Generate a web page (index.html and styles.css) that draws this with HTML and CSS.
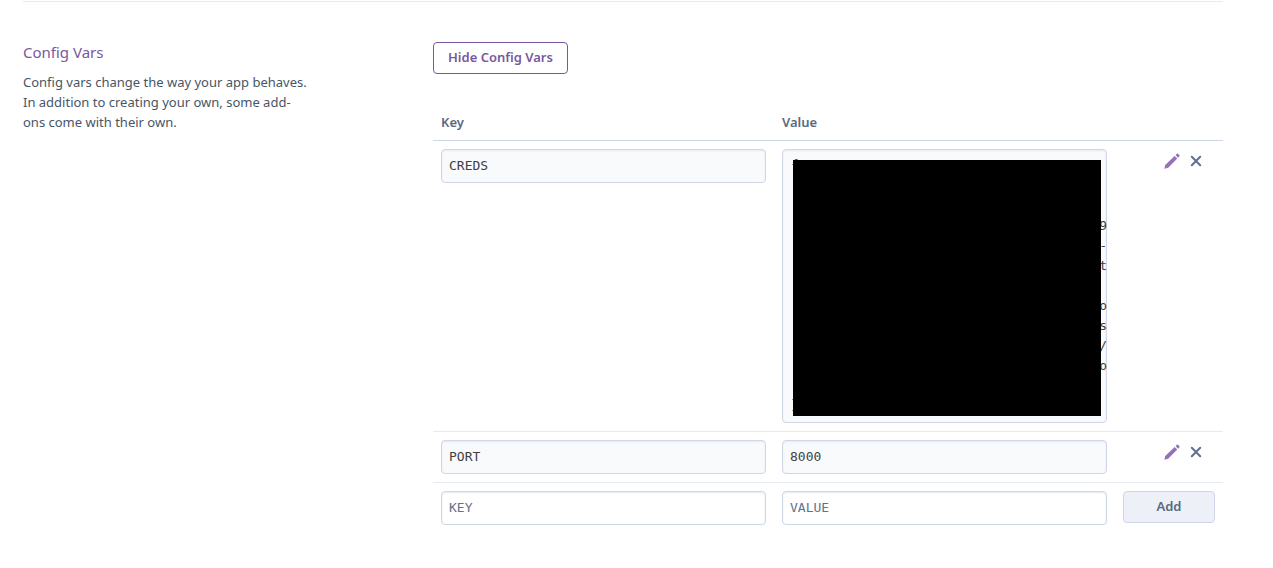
FILE: index.html
```html
<!DOCTYPE html>
<html lang="en">
<head>
<meta charset="utf-8">
<title>Config Vars</title>
<link rel="stylesheet" href="styles.css">
</head>
<body>
<svg class="sprite" aria-hidden="true">
  <symbol id="pencil" viewBox="0 0 16 16"><path d="M0.4 15.8 1.2 12 10.6 2.9 13.3 5.6 4.2 14.7ZM11.5 2.1 12.8.9C13.2.5 13.7.5 14.1.9L15.3 2.1C15.7 2.5 15.7 3 15.3 3.4L14.1 4.7Z"/></symbol>
  <symbol id="cross" viewBox="0 0 12 12"><path d="M1.8 1.8 10.2 10.2M10.2 1.8 1.8 10.2" fill="none" stroke="currentColor" stroke-width="2.1" stroke-linecap="round"/></symbol>
</svg>
<main class="page">
  <section class="settings">
    <div class="intro">
      <h2 class="title">Config Vars</h2>
      <p class="description">Config vars change the way your app behaves. In addition to creating your own, some add-ons come with their own.</p>
    </div>
    <form class="content">
      <button class="toggle" type="button">Hide Config Vars</button>
      <table class="vars">
        <thead>
          <tr><th class="field-col">Key</th><th class="field-col">Value</th><th class="action-col"></th></tr>
        </thead>
        <tbody>
          <tr>
            <td><input class="field saved" aria-label="Key" value="CREDS" readonly></td>
            <td>
              <div class="secret">
                <textarea class="field saved multiline" aria-label="Value" rows="13" readonly>{











}</textarea>
                <pre class="line-ends" aria-hidden="true">


9
-
t

o
s
/
o</pre>
                <div class="redaction"></div>
              </div>
            </td>
            <td>
              <div class="actions">
                <button class="icon-button edit" type="button" aria-label="Edit CREDS"><svg class="icon"><use href="#pencil"/></svg></button>
                <button class="icon-button" type="button" aria-label="Remove CREDS"><svg class="icon small"><use href="#cross"/></svg></button>
              </div>
            </td>
          </tr>
          <tr>
            <td><input class="field saved" aria-label="Key" value="PORT" readonly></td>
            <td><input class="field saved" aria-label="Value" value="8000" readonly></td>
            <td>
              <div class="actions">
                <button class="icon-button edit" type="button" aria-label="Edit PORT"><svg class="icon"><use href="#pencil"/></svg></button>
                <button class="icon-button" type="button" aria-label="Remove PORT"><svg class="icon small"><use href="#cross"/></svg></button>
              </div>
            </td>
          </tr>
          <tr>
            <td><input class="field" aria-label="New key" placeholder="KEY"></td>
            <td><input class="field" aria-label="New value" placeholder="VALUE"></td>
            <td><button class="add" type="button">Add</button></td>
          </tr>
        </tbody>
      </table>
    </form>
  </section>
</main>
</body>
</html>
```
FILE: styles.css
```css
* { box-sizing: border-box; }
body {
  margin: 0;
  background: #fff;
  color: #475666;
  font: 13px/20px "Noto Sans", sans-serif;
}
.sprite { position: absolute; width: 0; height: 0; }
.page { padding: 1px 50px 40px 23px; }
.settings {
  display: grid;
  grid-template-columns: 286px minmax(0, 1fr);
  column-gap: 124px;
  border-top: 1px solid #e6e9f0;
  padding-top: 40px;
}
.title {
  margin: 0 0 9px;
  color: #79589f;
  font-size: 15px;
  font-weight: 400;
  line-height: 21px;
}
.description { margin: 0; }
.toggle {
  display: block;
  height: 32px;
  padding: 0 14px 2px;
  border: 1px solid #79589f;
  border-radius: 4px;
  background: #fff;
  color: #79589f;
  font: 600 13px/20px "Noto Sans", sans-serif;
}
.vars {
  width: 100%;
  margin-top: 30px;
  border-collapse: separate;
  border-spacing: 0;
  table-layout: fixed;
}
.action-col { width: 108px; }
th {
  height: 37px;
  padding: 0 8px;
  border-bottom: 1px solid #cfd7e6;
  color: #596981;
  font-weight: 600;
  text-align: left;
}
td { padding: 8px; vertical-align: top; border-bottom: 1px solid #e6e9f0; }
tr:last-child td { border-bottom: 0; }
.field {
  display: block;
  width: 100%;
  height: 34px;
  margin: 0;
  padding: 5px 7px 7px;
  border: 1px solid #cfd7e6;
  border-radius: 4px;
  background: #fff;
  box-shadow: inset 0 1px 2px #e6e9f0;
  color: #3f3f44;
  font: 13px/20px "DejaVu Sans Mono", monospace;
  outline: 0;
}
.field::placeholder { color: #62738d; opacity: 1; }
.saved { background: #f9fafc; }
.multiline { height: auto; padding-left: 8px; resize: none; overflow: hidden; }
.secret { position: relative; }
.line-ends {
  position: absolute;
  top: 27px;
  right: 0;
  margin: 0;
  color: #3f3f44;
  font: 13px/20px "DejaVu Sans Mono", monospace;
}
.redaction { position: absolute; inset: 11px 6px 7px 11px; background: #000; }
.actions { display: flex; justify-content: flex-end; gap: 10px; padding: 4px 13px 0 0; }
.icon-button {
  display: flex;
  align-items: center;
  justify-content: center;
  height: 16px;
  padding: 0;
  border: 0;
  background: none;
  color: #62738d;
}
.edit { color: #9671b8; }
.icon { width: 16px; height: 16px; fill: currentColor; }
.small { width: 12px; height: 12px; }
.add {
  display: block;
  width: 100%;
  height: 32px;
  padding: 0 0 2px;
  border: 1px solid #cfd7e6;
  border-radius: 4px;
  background: #edf0f6;
  color: #596981;
  font: 600 13px/20px "Noto Sans", sans-serif;
}
```
